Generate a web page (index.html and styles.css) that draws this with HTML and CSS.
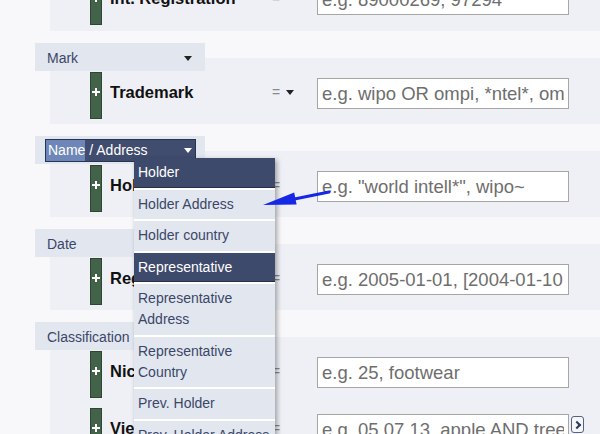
FILE: index.html
```html
<!DOCTYPE html>
<html lang="en">
<head>
    <meta charset="UTF-8">
    <meta name="viewport" content="width=device-width, initial-scale=1.0">
    <title>Brand Search - Criteria</title>
    <link rel="stylesheet" href="styles.css">
</head>
<body>
    <div class="criteria">
        <section class="group first">
            <div class="panel">
                <div class="row">
                    <span class="bar"></span>
                    <span class="label">Int. Registration</span>
                    <span class="op">=</span>
                    <input class="field" type="text" placeholder="e.g. 89000269, 97294">
                </div>
            </div>
        </section>

        <section class="group">
            <div class="group-head">Mark <span class="caret"></span></div>
            <div class="panel">
                <div class="row">
                    <span class="bar"></span>
                    <span class="label">Trademark</span>
                    <span class="op">= <span class="caret"></span></span>
                    <input class="field" type="text" placeholder="e.g. wipo OR ompi, *ntel*, om">
                </div>
            </div>
        </section>

        <section class="group">
            <div class="group-head open">
                <div class="select-box">
                    <span class="val"><span class="hl">Name</span> / Address</span>
                    <span class="caret white"></span>
                </div>
                <ul class="dropdown">
                    <li class="on">Holder</li>
                    <li>Holder Address</li>
                    <li>Holder country</li>
                    <li class="on">Representative</li>
                    <li>Representative Address</li>
                    <li>Representative Country</li>
                    <li>Prev. Holder</li>
                    <li>Prev. Holder Address</li>
                </ul>
            </div>
            <div class="panel">
                <div class="row">
                    <span class="bar"></span>
                    <span class="label">Holder</span>
                    <span class="op">=</span>
                    <input class="field" type="text" placeholder="e.g. &quot;world intell*&quot;, wipo~">
                </div>
            </div>
        </section>

        <section class="group">
            <div class="group-head">Date</div>
            <div class="panel">
                <div class="row">
                    <span class="bar"></span>
                    <span class="label">Registration Date</span>
                    <span class="op">=</span>
                    <input class="field" type="text" placeholder="e.g. 2005-01-01, [2004-01-10 TO 2005-01-01]">
                </div>
            </div>
        </section>

        <section class="group">
            <div class="group-head">Classification</div>
            <div class="panel">
                <div class="row">
                    <span class="bar"></span>
                    <span class="label">Nice Classification</span>
                    <span class="op">=</span>
                    <input class="field" type="text" placeholder="e.g. 25, footwear">
                </div>
                <div class="row">
                    <span class="bar"></span>
                    <span class="label">Vienna Classification</span>
                    <span class="op">=</span>
                    <input class="field" type="text" placeholder="e.g. 05.07.13, apple AND tree">
                    <button class="more"></button>
                </div>
            </div>
        </section>
    </div>

    <!-- annotation arrow drawn over the form -->
    <svg class="arrow" width="600" height="434" viewBox="0 0 600 434">
        <line x1="329" y1="192" x2="292" y2="199.5" stroke="#1428e6" stroke-width="3" stroke-linecap="round"/>
        <polygon points="263,205 294.2,192.6 296.6,204.4" fill="#1428e6"/>
    </svg>
</body>
</html>
```

FILE: styles.css
```css
body {
    margin: 0;
    background-color: #f8f8fa;
    font-family: 'Liberation Sans', Arial, sans-serif;
    overflow: hidden;
}
.criteria {
    padding-left: 35px;
}
.group {
    margin-top: 12px;
}
.group.first {
    margin-top: -36px;
}
.group.first .panel {
    padding-bottom: 6px;
}
.group-head {
    position: relative;
    z-index: 2;
    width: 170px;
    height: 28px;
    box-sizing: border-box;
    padding: 2px 13px 0 12px;
    background-color: #e2e6ee;
    color: #3b4769;
    font-size: 14px;
    display: flex;
    justify-content: space-between;
    align-items: center;
}
.group-head.open {
    z-index: 10;
    padding: 0 9px 0 10px;
}
.caret {
    display: inline-block;
    width: 0;
    height: 0;
    border-left: 4.5px solid transparent;
    border-right: 4.5px solid transparent;
    border-top: 5px solid #222;
}
.caret.white {
    border-top-color: #fff;
}
.select-box {
    width: 151px;
    height: 23px;
    box-sizing: border-box;
    border: 1px solid #283251;
    background-color: #414d6e;
    color: #fff;
    padding-right: 3px;
    display: flex;
    justify-content: space-between;
    align-items: center;
}
.val {
    line-height: 21px;
}
.hl {
    display: inline-block;
    background-color: #6e87b8;
    padding-left: 2px;
}
.dropdown {
    position: absolute;
    left: 99px;
    top: 22px;
    width: 141px;
    margin: 0;
    padding: 0;
    list-style: none;
    background: #fff;
    box-shadow: 2px 2px 5px rgba(0, 0, 0, 0.35);
}
.dropdown li {
    padding: 4px 4px 4.5px;
    line-height: 21px;
    border-bottom: 2px solid #fff;
    background-color: #e2e6ef;
    color: #3a4768;
}
.dropdown li.on {
    background-color: #3e4a6b;
    color: #fff;
    box-shadow: inset 0 -1px #262f48;
}
.panel {
    margin-top: -13px;
    margin-left: 15px;
    background-color: #eff0f5;
    padding: 14px 0 5px 40px;
}
.row {
    display: flex;
    align-items: flex-start;
    height: 47px;
}
.row + .row {
    margin-top: 10px;
}
.bar {
    position: relative;
    width: 12px;
    height: 47px;
    box-sizing: border-box;
    background-color: #42634a;
    border: 1px solid #2d4733;
}
.bar::before,
.bar::after {
    content: '';
    position: absolute;
    background: #fff;
}
.bar::before {
    left: 1px;
    top: 18px;
    width: 8px;
    height: 2px;
}
.bar::after {
    left: 4px;
    top: 15px;
    width: 2px;
    height: 8px;
}
.label {
    width: 162px;
    margin: 10px 0 0 8px;
    font-weight: bold;
    font-size: 16.5px;
    line-height: 20px;
    color: #111;
    white-space: nowrap;
    overflow: hidden;
}
.op {
    width: 45px;
    margin-top: 10px;
    font-size: 14px;
    line-height: 20px;
    color: #8a8a8a;
    display: flex;
    align-items: center;
    gap: 6px;
}
.field {
    width: 252px;
    height: 31px;
    box-sizing: border-box;
    margin: 6px 0 0;
    padding: 0 4px;
    border: 1px solid #a6a6a6;
    border-radius: 0;
    background: #fff;
    font-family: 'Liberation Sans', Arial, sans-serif;
    font-size: 18.5px;
    color: #333;
    outline: none;
}
.field::placeholder {
    color: #6e6e6e;
}
.more {
    position: relative;
    width: 13px;
    height: 17px;
    margin: 8px 0 0 2px;
    padding: 0;
    border: 1px solid #56627e;
    border-radius: 3px;
    background: #f6f7fa;
}
.more::after {
    content: '';
    position: absolute;
    left: 2px;
    top: 5px;
    width: 4px;
    height: 4px;
    border-right: 2px solid #2e3a5c;
    border-top: 2px solid #2e3a5c;
    transform: rotate(45deg);
}
.arrow {
    position: absolute;
    top: 0;
    left: 0;
    z-index: 20;
    pointer-events: none;
}
```
